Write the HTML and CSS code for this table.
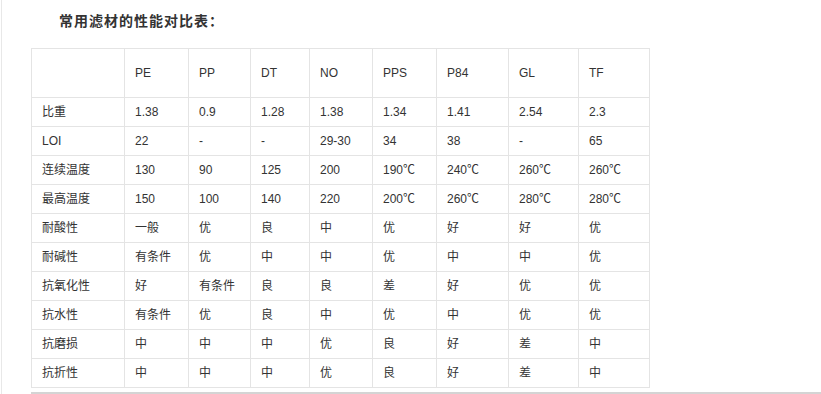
FILE: index.html
```html
<!DOCTYPE html>
<html lang="zh">

<head>
    <meta charset="UTF-8">
    <meta name="viewport" content="width=device-width, initial-scale=1.0">
    <link rel="stylesheet" href="styles.css">
    <title>常用滤材的性能对比表</title>
</head>

<body>
    <div class="page">
        <h3 class="titulo">常用滤材的性能对比表：</h3>
        <table class="tabla">
            <tr class="cabecera">
                <td class="c1"></td>
                <td class="c2">PE</td>
                <td class="c3">PP</td>
                <td class="c4">DT</td>
                <td class="c5">NO</td>
                <td class="c6">PPS</td>
                <td class="c7">P84</td>
                <td class="c8">GL</td>
                <td class="c9">TF</td>
            </tr>
            <tr>
                <td>比重</td><td>1.38</td><td>0.9</td><td>1.28</td><td>1.38</td><td>1.34</td><td>1.41</td><td>2.54</td><td>2.3</td>
            </tr>
            <tr>
                <td>LOI</td><td>22</td><td>-</td><td>-</td><td>29-30</td><td>34</td><td>38</td><td>-</td><td>65</td>
            </tr>
            <tr>
                <td>连续温度</td><td>130</td><td>90</td><td>125</td><td>200</td><td>190℃</td><td>240℃</td><td>260℃</td><td>260℃</td>
            </tr>
            <tr>
                <td>最高温度</td><td>150</td><td>100</td><td>140</td><td>220</td><td>200℃</td><td>260℃</td><td>280℃</td><td>280℃</td>
            </tr>
            <tr>
                <td>耐酸性</td><td>一般</td><td>优</td><td>良</td><td>中</td><td>优</td><td>好</td><td>好</td><td>优</td>
            </tr>
            <tr>
                <td>耐碱性</td><td>有条件</td><td>优</td><td>中</td><td>中</td><td>优</td><td>中</td><td>中</td><td>优</td>
            </tr>
            <tr>
                <td>抗氧化性</td><td>好</td><td>有条件</td><td>良</td><td>良</td><td>差</td><td>好</td><td>优</td><td>优</td>
            </tr>
            <tr>
                <td>抗水性</td><td>有条件</td><td>优</td><td>良</td><td>中</td><td>优</td><td>中</td><td>优</td><td>优</td>
            </tr>
            <tr>
                <td>抗磨损</td><td>中</td><td>中</td><td>中</td><td>优</td><td>良</td><td>好</td><td>差</td><td>中</td>
            </tr>
            <tr>
                <td>抗折性</td><td>中</td><td>中</td><td>中</td><td>优</td><td>良</td><td>好</td><td>差</td><td>中</td>
            </tr>
        </table>
        <div class="pie"></div>
    </div>
</body>

</html>
```

FILE: styles.css
```css
body {
    margin: 0;
    background-color: #fff;
    font-family: "Liberation Sans", Arial, "Noto Sans CJK SC", sans-serif;
    color: #333;
}

.page {
    margin-left: 1px;
    border-left: 1px solid #e8e8e8;
    height: 394px;
    overflow: hidden;
}

.titulo {
    margin: 0;
    padding: 12px 0 0 57px;
    height: 48px;
    box-sizing: border-box;
    font-size: 14px;
    line-height: 18px;
    font-weight: bold;
    letter-spacing: 1px;
    color: #333;
}

.tabla {
    margin-left: 29px;
    border-collapse: collapse;
    table-layout: fixed;
    width: 619px;
    font-size: 12px;
}

.tabla td {
    border: 1px solid #e4e4e4;
    height: 28px;
    padding: 0 0 0 10px;
    vertical-align: middle;
    line-height: 16px;
    white-space: nowrap;
}

.tabla .cabecera td {
    height: 48px;
}

.c1 { width: 82px; }
.c2 { width: 53px; }
.c3 { width: 51px; }
.c4 { width: 48px; }
.c5 { width: 52px; }
.c6 { width: 53px; }
.c7 { width: 61px; }
.c8 { width: 59px; }
.c9 { width: 60px; }

.pie {
    margin: 4px 0 0 29px;
    border-top: 2px solid #d4d4d4;
}
```
